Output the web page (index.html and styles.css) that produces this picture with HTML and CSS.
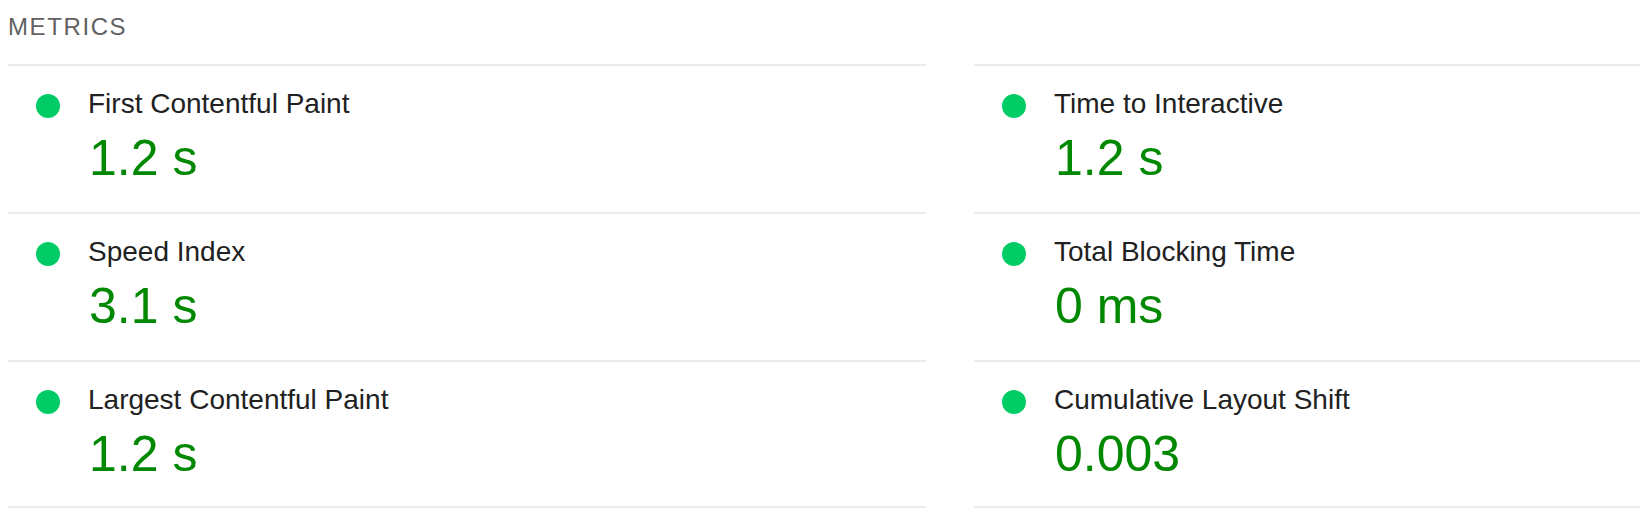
FILE: index.html
```html
<!DOCTYPE html>
<html lang="en">
<head>
  <meta charset="UTF-8" />
  <meta name="viewport" content="width=device-width, initial-scale=1.0"/>
  <title>Metrics</title>
  <link rel="stylesheet" href="styles.css">
</head>
<body>
  <section class="metrics">
    <h2 class="metrics-title">Metrics</h2>

    <div class="metrics-grid">
      <div class="metric">
        <span class="dot"></span>
        <span class="metric-name">First Contentful Paint</span>
        <span class="metric-value">1.2 s</span>
      </div>
      <div class="metric">
        <span class="dot"></span>
        <span class="metric-name">Time to Interactive</span>
        <span class="metric-value">1.2 s</span>
      </div>
      <div class="metric">
        <span class="dot"></span>
        <span class="metric-name">Speed Index</span>
        <span class="metric-value">3.1 s</span>
      </div>
      <div class="metric">
        <span class="dot"></span>
        <span class="metric-name">Total Blocking Time</span>
        <span class="metric-value">0 ms</span>
      </div>
      <div class="metric">
        <span class="dot"></span>
        <span class="metric-name">Largest Contentful Paint</span>
        <span class="metric-value">1.2 s</span>
      </div>
      <div class="metric">
        <span class="dot"></span>
        <span class="metric-name">Cumulative Layout Shift</span>
        <span class="metric-value">0.003</span>
      </div>
    </div>
  </section>
</body>
</html>
```

FILE: styles.css
```css
body {
  margin: 0;
  padding: 0 8px;
  background: #fff;
  font-family: "Liberation Sans", Arial, Helvetica, sans-serif;
  overflow: hidden;
}

.metrics-title {
  margin: 0 0 25px;
  padding-top: 15px;
  font-size: 24px;
  line-height: 24px;
  font-weight: normal;
  text-transform: uppercase;
  letter-spacing: 1.6px;
  color: #616161;
}

.metrics-grid {
  display: grid;
  grid-template-columns: 918px 918px;
  column-gap: 48px;
}

.metric {
  display: grid;
  grid-template-columns: 24px 1fr;
  column-gap: 28px;
  padding: 24px 0 29px 28px;
  border-top: 2px solid #ebebeb;
}

.metric:nth-last-child(-n+2) {
  padding-bottom: 27px;
  border-bottom: 2px solid #ebebeb;
}

.dot {
  width: 24px;
  height: 24px;
  margin-top: 4px;
  border-radius: 50%;
  background-color: #0c6;
}

.metric-name {
  font-size: 28px;
  line-height: 28px;
  color: #212121;
}

.metric-value {
  grid-column: 2;
  margin: 15px 0 0 1px;
  font-size: 50px;
  line-height: 50px;
  color: #080;
}
```
